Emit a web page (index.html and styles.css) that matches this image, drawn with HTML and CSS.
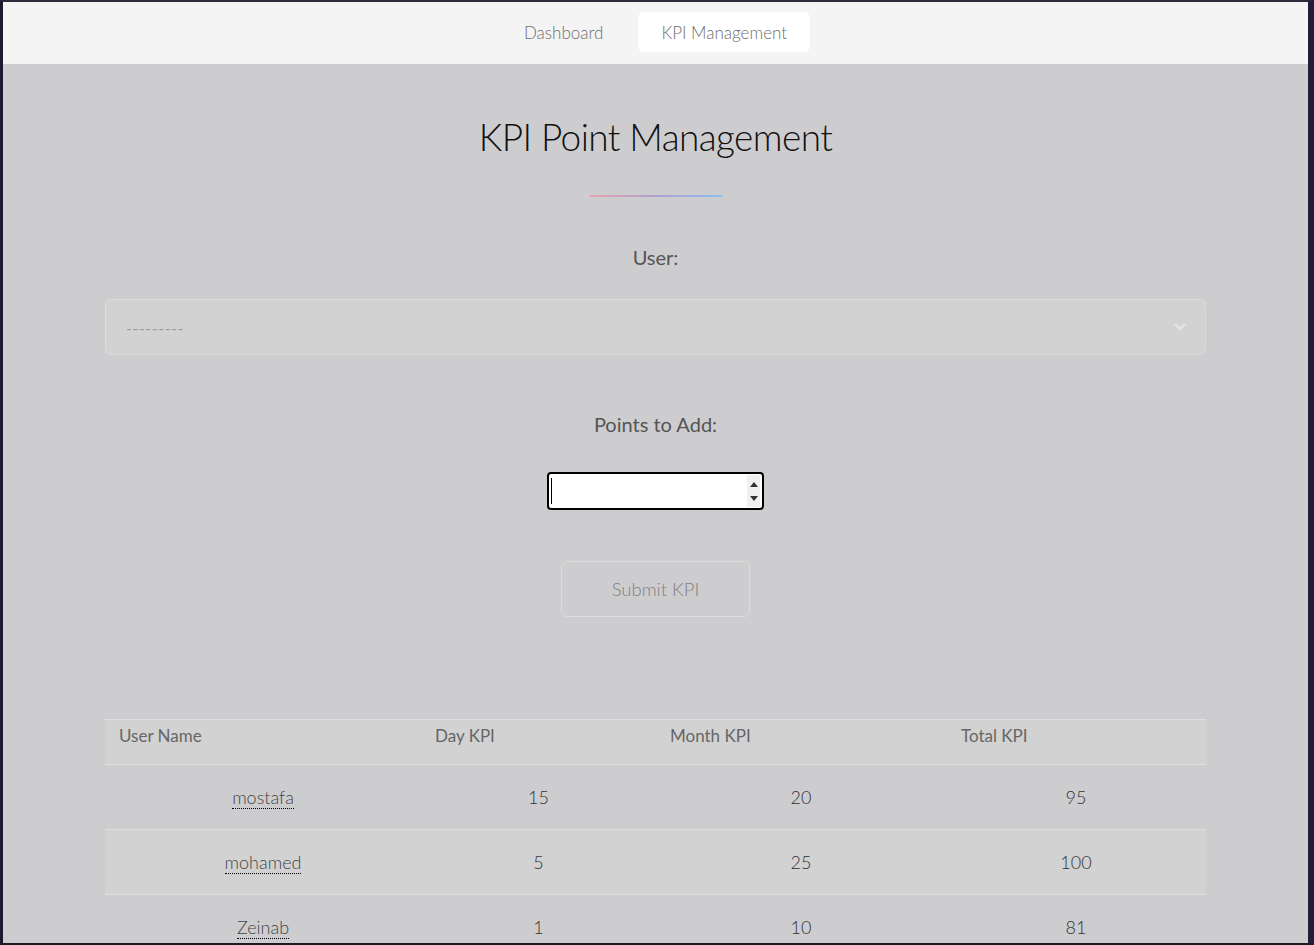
FILE: index.html
```html
<!DOCTYPE html>
<html lang="en">
<head>
<meta charset="utf-8">
<title>KPI Point Management</title>
<link rel="stylesheet" href="styles.css">
</head>
<body>
<div class="frame">
  <nav class="nav">
    <a class="tab" href="#">Dashboard</a>
    <a class="tab active" href="#">KPI Management</a>
  </nav>
  <main class="main">
    <h1 class="title">KPI Point Management</h1>
    <div class="divider"></div>
    <form class="form">
      <label class="label">User:</label>
      <div class="select">
        <span class="placeholder">---------</span>
        <svg class="chevron" width="14" height="10" viewBox="0 0 14 10"><path d="M2 2 L7 7 L12 2" fill="none" stroke="#e2e2e2" stroke-width="3"/></svg>
      </div>
      <label class="label points">Points to Add:</label>
      <div class="number">
        <span class="caret"></span>
        <span class="spin">
          <svg width="8" height="5" viewBox="0 0 8 5"><path d="M0 5 L4 0 L8 5Z" fill="#333"/></svg>
          <svg width="8" height="5" viewBox="0 0 8 5"><path d="M0 0 L4 5 L8 0Z" fill="#333"/></svg>
        </span>
      </div>
      <button type="button" class="submit">Submit KPI</button>
    </form>
    <table class="table">
      <thead>
        <tr><th class="c1">User Name</th><th class="c2">Day KPI</th><th class="c3">Month KPI</th><th class="c4">Total KPI</th></tr>
      </thead>
      <tbody>
        <tr><td><abbr>mostafa</abbr></td><td>15</td><td>20</td><td>95</td></tr>
        <tr class="alt"><td><abbr>mohamed</abbr></td><td>5</td><td>25</td><td>100</td></tr>
        <tr><td><abbr>Zeinab</abbr></td><td>1</td><td>10</td><td>81</td></tr>
      </tbody>
    </table>
  </main>
</div>
</body>
</html>
```

FILE: styles.css
```css
html, body {
  margin: 0;
  padding: 0;
  height: 100%;
}
body {
  background: #27223a;
  font-family: "Lato", "Open Sans", sans-serif;
}
.frame {
  box-sizing: border-box;
  height: 100vh;
  border-style: solid;
  border-color: #2d2b3b #231d3b #1e1b1e #1f1a30;
  border-width: 2px 6px 2px 3px;
  background: #cdcdcf;
  overflow: hidden;
}
.nav {
  box-sizing: border-box;
  height: 62px;
  padding-top: 10px;
  background: #f4f4f4;
  display: flex;
  justify-content: center;
  align-items: flex-start;
  gap: 12px;
}
.tab {
  height: 40px;
  padding: 0 23px;
  display: flex;
  align-items: center;
  border-radius: 6px;
  font-size: 17px;
  font-weight: 300;
  color: #6e6e6e;
  text-decoration: none;
}
.tab.active {
  background: #ffffff;
}
.main {
  padding: 49px 102px 0 102px;
  display: flex;
  flex-direction: column;
  align-items: center;
}
.title {
  margin: 0;
  font-size: 37px;
  font-weight: 300;
  letter-spacing: -0.6px;
  line-height: 48px;
  color: #111;
}
.divider {
  margin-top: 34px;
  width: 132px;
  height: 2px;
  background: linear-gradient(90deg, #eaa0b2, #b0a0d0, #88c0f2);
}
.form {
  width: 100%;
  display: flex;
  flex-direction: column;
  align-items: center;
}
.label {
  margin-top: 47px;
  font-size: 20px;
  line-height: 26px;
  color: #555;
}
.select {
  margin-top: 29px;
  box-sizing: border-box;
  width: 100%;
  height: 56px;
  border: 1px solid #dcdcdc;
  border-radius: 6px;
  background: #d2d2d2;
  display: flex;
  align-items: center;
  justify-content: space-between;
  padding: 0 18px 0 20px;
}
.placeholder {
  color: #9a9a9a;
  font-size: 16px;
  letter-spacing: 0.5px;
}
.points {
  margin-top: 56px;
}
.number {
  margin-top: 35px;
  box-sizing: border-box;
  width: 217px;
  height: 38px;
  border: 2px solid #000;
  border-radius: 4px;
  background: #fff;
  display: flex;
  align-items: center;
  justify-content: space-between;
  padding: 0 2px 0 2px;
}
.caret {
  width: 1px;
  height: 26px;
  background: #000;
}
.spin {
  width: 13px;
  height: 32px;
  background: #f0f0f0;
  display: flex;
  flex-direction: column;
  align-items: center;
  justify-content: space-around;
  padding: 2px 0;
  box-sizing: border-box;
}
.submit {
  margin-top: 51px;
  width: 189px;
  height: 56px;
  border: 1px solid #dcdcdc;
  border-radius: 6px;
  background: transparent;
  font-family: inherit;
  font-size: 18.5px;
  font-weight: 300;
  color: #808080;
}
.table {
  margin-top: 102px;
  width: 100%;
  border-collapse: collapse;
  font-size: 18px;
  font-weight: 300;
  color: #333;
}
.table th {
  text-align: left;
  font-weight: 400;
  font-size: 17px;
  color: #666;
  background: #d2d2d2;
  height: 45px;
  padding: 5px 14px 0;
  vertical-align: top;
  border-top: 1px solid #dedede;
  border-bottom: 1px solid #dedede;
  box-sizing: border-box;
}
.table th.c4 { padding-left: 15px; }
.c1 { width: 316px; }
.c2 { width: 235px; }
.c3 { width: 290px; }
.table td {
  text-align: center;
  height: 64px;
  border-bottom: 1px solid #dedede;
  padding: 0;
}
.table tr.alt td {
  background: #d2d2d2;
}
abbr {
  text-decoration: none;
  border-bottom: 1px dotted #000;
  color: #444;
}
```
